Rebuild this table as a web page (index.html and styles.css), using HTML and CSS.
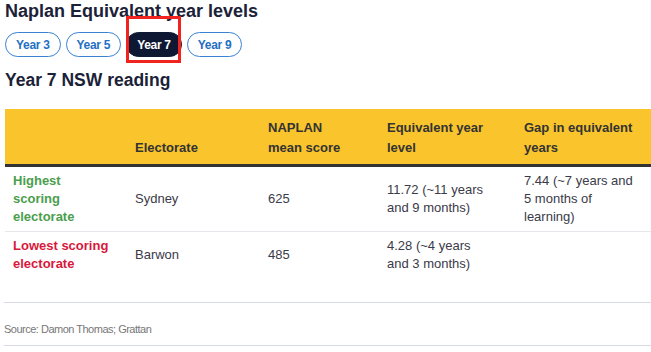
FILE: index.html
```html
<!DOCTYPE html>
<html lang="en">
<head>
<meta charset="utf-8">
<title>Naplan Equivalent year levels</title>
<link rel="stylesheet" href="styles.css">
</head>
<body>
<div class="widget">
  <h2 class="title">Naplan Equivalent year levels</h2>
  <div class="tabs">
    <button class="tab">Year 3</button>
    <button class="tab">Year 5</button>
    <button class="tab active">Year 7</button>
    <button class="tab">Year 9</button>
  </div>
  <div class="highlight"></div>
  <h3 class="subtitle">Year 7 NSW reading</h3>
  <table class="data">
    <colgroup>
      <col class="c1"><col class="c2"><col class="c3"><col class="c4"><col class="c5">
    </colgroup>
    <thead>
      <tr>
        <th class="p1"></th>
        <th class="p2">Electorate</th>
        <th class="p3">NAPLAN mean score</th>
        <th class="p4">Equivalent year level</th>
        <th class="p5">Gap in equivalent years</th>
      </tr>
    </thead>
    <tbody>
      <tr>
        <td class="p1 label high">Highest<br>scoring electorate</td>
        <td class="p2">Sydney</td>
        <td class="p3">625</td>
        <td class="p4">11.72 (~11 years and 9 months)</td>
        <td class="p5">7.44 (~7 years and 5 months of learning)</td>
      </tr>
      <tr class="last">
        <td class="p1 label low">Lowest scoring electorate</td>
        <td class="p2">Barwon</td>
        <td class="p3">485</td>
        <td class="p4">4.28 (~4 years and 3 months)</td>
        <td class="p5"></td>
      </tr>
    </tbody>
  </table>
  <div class="source">Source: Damon Thomas; Grattan</div>
</div>
</body>
</html>
```

FILE: styles.css
```css
html, body {
  margin: 0;
  padding: 0;
  background: #ffffff;
}

body {
  font-family: "Liberation Sans", Arial, sans-serif;
  color: #333333;
}

.widget {
  position: relative;
  width: 651px;
}

.title {
  margin: 0 0 10px 5px;
  font-size: 18px;
  line-height: 22px;
  font-weight: bold;
  letter-spacing: 0;
  color: #1b2238;
}

.tabs {
  display: flex;
  gap: 5px;
  margin-left: 5px;
  height: 25px;
}

.tab {
  box-sizing: border-box;
  height: 25px;
  padding: 0 10px;
  border: 1.5px solid #3a82d2;
  border-radius: 13px;
  background: #ffffff;
  color: #2470c4;
  font-family: "Liberation Sans", Arial, sans-serif;
  font-size: 12px;
  font-weight: bold;
  letter-spacing: -0.3px;
  line-height: 20px;
  cursor: pointer;
}

.tab.active {
  background: #0f1833;
  border-color: #0f1833;
  color: #ffffff;
}

.highlight {
  position: absolute;
  left: 126px;
  top: 16px;
  width: 55px;
  height: 47px;
  box-sizing: border-box;
  border: 3px solid #f0231f;
  pointer-events: none;
}

.subtitle {
  margin: 12px 0 18px 5px;
  font-size: 17.5px;
  line-height: 22px;
  font-weight: bold;
  letter-spacing: 0;
  color: #1b2238;
}

.data {
  margin-left: 5px;
  width: 646px;
  table-layout: fixed;
  border-collapse: collapse;
  margin-bottom: 24px;
}

.c1 { width: 122px; }
.c2 { width: 133px; }
.c3 { width: 119px; }
.c4 { width: 137px; }
.c5 { width: 135px; }

.data th {
  background: #f9c42c;
  text-align: left;
  vertical-align: bottom;
  font-size: 13px;
  line-height: 20px;
  font-weight: bold;
  color: #333333;
  padding-top: 9px;
  padding-bottom: 6px;
  border-bottom: 3px solid #333333;
}

.data td {
  font-size: 13px;
  line-height: 18px;
  color: #3a3a48;
  padding-top: 5px;
  padding-bottom: 5px;
  vertical-align: middle;
  border-bottom: 1px solid #e4e7eb;
}

.data tr.last td {
  border-bottom: none;
}

.p1 { padding-left: 8px; padding-right: 14px; }
.p2 { padding-left: 8px; padding-right: 8px; }
.p3 { padding-left: 8px; padding-right: 31px; }
.p4 { padding-left: 8px; padding-right: 27px; }
.p5 { padding-left: 8px; padding-right: 15px; }

.data td.label {
  font-weight: bold;
}

.data td.high {
  color: #4a9e4c;
}

.data td.low {
  color: #d8173c;
}

.source {
  margin-left: 4px;
  padding: 18px 0 8px;
  border-top: 1px solid #d6dbe2;
  border-bottom: 1px solid #d6dbe2;
  font-family: "Liberation Sans", Arial, sans-serif;
  font-size: 11px;
  line-height: 16px;
  letter-spacing: -0.5px;
  color: #777777;
}
```
